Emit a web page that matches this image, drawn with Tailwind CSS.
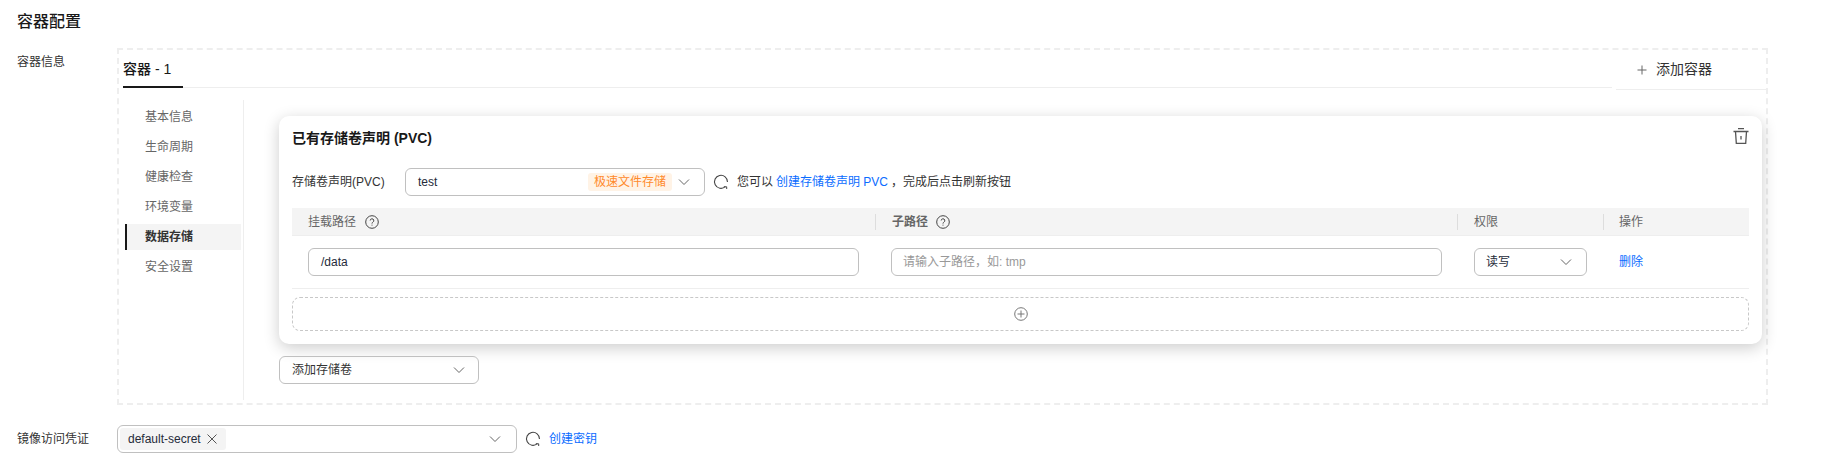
<!DOCTYPE html>
<html lang="zh-CN">
<head>
  <meta charset="UTF-8" />
  <title>容器配置</title>
  <script src="https://cdn.jsdelivr.net/npm/@tailwindcss/browser@4"></script>
</head>
<body class="bg-white">
  <div class="w-[1845px] h-[472px] overflow-hidden pl-[17px] pt-[10px] text-[12px] text-[#252b3a] font-['Liberation_Sans','Noto_Sans_CJK_SC',sans-serif]">
    <h1 class="h-[24px] leading-[24px] text-[16px] font-medium text-[#191919]">容器配置</h1>

    <!-- 容器信息 -->
    <div class="flex mt-[14px]">
      <div class="w-[100px] pt-[4px] h-[24px] leading-[20px] text-[#333]">容器信息</div>
      <div class="w-[1651px] h-[357px] border-2 border-dashed border-[#eeeeee]">
        <div class="flex h-[39px]">
          <div class="flex-1 ml-[4px] h-[38px] border-b border-[#eeeeee]">
            <div class="w-[60px] h-[38px] leading-[38px] text-[14px] font-medium text-[#191919] border-b-2 border-[#191919]">容器 - 1</div>
          </div>
          <div class="w-[150px] ml-[4px] h-[40px] border-b border-[#eeeeee] flex items-center pl-[20px] gap-[8px] text-[14px] text-[#333] bg-white">
            <svg width="12" height="12" viewBox="0 0 12 12" fill="none" stroke="#666" stroke-width="1"><path d="M6 1.500V10.500M1.500 6H10.500"/></svg>
            <span>添加容器</span>
          </div>
        </div>

        <div class="flex mt-[11px]">
          <div class="w-[125px] h-[300px] border-r border-[#eeeeee] pt-[4px] pl-[6px] pr-[2px] flex flex-col gap-[4px] text-[#666]">
            <div class="h-[26px] leading-[26px] pl-[20px]">基本信息</div>
            <div class="h-[26px] leading-[26px] pl-[20px]">生命周期</div>
            <div class="h-[26px] leading-[26px] pl-[20px]">健康检查</div>
            <div class="h-[26px] leading-[26px] pl-[20px]">环境变量</div>
            <div class="h-[26px] leading-[26px] pl-[18px] bg-[#f4f4f4] border-l-2 border-[#191919] font-semibold text-[#333]">数据存储</div>
            <div class="h-[26px] leading-[26px] pl-[20px]">安全设置</div>
          </div>

          <div class="pl-[35px] pt-[16px]">
            <div class="w-[1483px] h-[228px] bg-white rounded-[10px] shadow-[0_4px_16px_rgba(0,0,0,0.2)] px-[13px] pt-[12px]">
              <div class="flex justify-between items-start h-[20px]">
                <div class="text-[14px] leading-[20px] font-semibold text-[#191919]">已有存储卷声明 (PVC)</div>
                <svg width="16" height="16" viewBox="0 0 16 16" fill="none" stroke="#555" stroke-width="1.300"><path d="M0.500 3.500H15.500M5 0.700H11M2.500 3.500L3.300 15.300H12.700L13.500 3.500M8 8V11.500"/></svg>
              </div>

              <div class="flex items-center mt-[20px] h-[28px]">
                <div class="w-[113px] text-[#333]">存储卷声明(PVC)</div>
                <div class="w-[300px] h-[28px] border border-[#c0c0c0] rounded-[6px] flex items-center pl-[12px] pr-[14px]">
                  <span class="flex-1">test</span>
                  <span class="h-[18px] leading-[18px] px-[6px] rounded-[3px] bg-[#fff3e6] text-[#ff8a2b]">极速文件存储</span>
                  <svg class="ml-[6px]" width="12" height="12" viewBox="0 0 12 12" fill="none" stroke="#666" stroke-width="1"><path d="M1 3.500L6 8.500L11 3.500"/></svg>
                </div>
                <svg class="ml-[8px]" width="16" height="16" viewBox="0 0 16 16" fill="none" stroke="#444" stroke-width="1.100"><path d="M12.300 12.700A6.500 6.500 0 1 1 14.500 8"/><path d="M10.800 12.800H13.700V15" stroke-width="1"/></svg>
                <span class="ml-[8px] text-[#333]">您可以</span>
                <span class="ml-[3px] text-[#0a6cff]">创建存储卷声明 PVC</span>
                <span class="ml-[3px] text-[#333]">，</span>
                <span class="text-[#333]">完成后点击刷新按钮</span>
              </div>

              <div class="grid grid-cols-[583px_582px_146px_146px] h-[28px] mt-[12px] items-center bg-[#f4f4f4] border-b border-[#eeeeee] text-[#666]">
                <div class="h-[16px] leading-[16px] pl-[16px] flex items-center gap-[9px]">
                  <span>挂载路径</span>
                  <svg width="14" height="14" viewBox="0 0 14 14" fill="none" stroke="#444"><circle cx="7" cy="7" r="6.300"/><path d="M5.200 5.500A1.800 1.800 0 1 1 7.800 7.200C7.200 7.600 7 7.900 7 8.600M7 9.700V10.600"/></svg>
                </div>
                <div class="h-[16px] leading-[16px] pl-[16px] border-l border-[#dddddd] flex items-center gap-[8px] font-semibold">
                  <span>子路径</span>
                  <svg width="14" height="14" viewBox="0 0 14 14" fill="none" stroke="#444"><circle cx="7" cy="7" r="6.300"/><path d="M5.200 5.500A1.800 1.800 0 1 1 7.800 7.200C7.200 7.600 7 7.900 7 8.600M7 9.700V10.600"/></svg>
                </div>
                <div class="h-[16px] leading-[16px] pl-[16px] border-l border-[#dddddd]">权限</div>
                <div class="h-[16px] leading-[16px] pl-[15px] border-l border-[#dddddd]">操作</div>
              </div>

              <div class="grid grid-cols-[583px_582px_146px_146px] h-[53px] items-center border-b border-[#eeeeee]">
                <div class="pl-[16px] pr-[16px]">
                  <div class="h-[28px] leading-[26px] border border-[#c0c0c0] rounded-[6px] pl-[12px]">/data</div>
                </div>
                <div class="pl-[16px] pr-[15px]">
                  <div class="h-[28px] leading-[26px] border border-[#c0c0c0] rounded-[6px] pl-[11px] text-[#999]">请输入子路径，如: tmp</div>
                </div>
                <div class="pl-[17px] pr-[16px]">
                  <div class="h-[28px] border border-[#c0c0c0] rounded-[6px] pl-[11px] pr-[14px] flex items-center justify-between">
                    <span>读写</span>
                    <svg width="12" height="12" viewBox="0 0 12 12" fill="none" stroke="#666" stroke-width="1"><path d="M1 3.500L6 8.500L11 3.500"/></svg>
                  </div>
                </div>
                <div class="pl-[16px] text-[#0a6cff]">删除</div>
              </div>

              <div class="h-[34px] mt-[8px] border border-dashed border-[#c8c8c8] rounded-[8px] flex items-center justify-center">
                <svg width="14" height="14" viewBox="0 0 14 14" fill="none" stroke="#777"><circle cx="7" cy="7" r="6.300"/><path d="M7 3.500V10.500M3.500 7H10.500"/></svg>
              </div>
            </div>

            <div class="w-[200px] h-[28px] mt-[12px] border border-[#c0c0c0] rounded-[6px] flex items-center justify-between pl-[12px] pr-[13px] text-[#333]">
              <span>添加存储卷</span>
              <svg width="12" height="12" viewBox="0 0 12 12" fill="none" stroke="#666" stroke-width="1"><path d="M1 3.500L6 8.500L11 3.500"/></svg>
            </div>
          </div>
        </div>
      </div>
    </div>

    <!-- 镜像访问凭证 -->
    <div class="flex items-center mt-[20px] h-[28px]">
      <div class="w-[100px] text-[#333]">镜像访问凭证</div>
      <div class="w-[400px] h-[28px] border border-[#c0c0c0] rounded-[6px] flex items-center justify-between pl-[2px] pr-[15px]">
        <div class="h-[22px] px-[8px] rounded-[3px] bg-[#f4f4f4] flex items-center gap-[5px]">
          <span>default-secret</span>
          <svg width="12" height="12" viewBox="0 0 12 12" fill="none" stroke="#555" stroke-width="1"><path d="M1.500 1.500L10.500 10.500M10.500 1.500L1.500 10.500"/></svg>
        </div>
        <svg width="12" height="12" viewBox="0 0 12 12" fill="none" stroke="#666" stroke-width="1"><path d="M1 3.500L6 8.500L11 3.500"/></svg>
      </div>
      <svg class="ml-[8px]" width="16" height="16" viewBox="0 0 16 16" fill="none" stroke="#444" stroke-width="1.100"><path d="M12.300 12.700A6.500 6.500 0 1 1 14.500 8"/><path d="M10.800 12.800H13.700V15" stroke-width="1"/></svg>
      <span class="ml-[8px] text-[#0a6cff]">创建密钥</span>
    </div>
  </div>
</body>
</html>
